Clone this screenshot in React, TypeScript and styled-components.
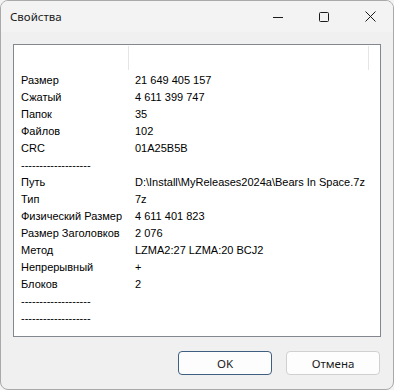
import React from "react";
import styled, { createGlobalStyle } from "styled-components";

const GlobalStyle = createGlobalStyle`
  html, body { margin: 0; padding: 0; background: #f3f3f3; }
  * { box-sizing: border-box; }
`;

const Window = styled.div`
  width: 394px;
  height: 390px;
  border: 1px solid #a9a9a9;
  border-radius: 8px;
  background: #f0f0f0;
  overflow: hidden;
  display: flex;
  flex-direction: column;
  font-family: "Liberation Sans", Arial, sans-serif;
  color: #000;
`;

const TitleBar = styled.div`
  height: 31px;
  display: flex;
  align-items: center;
  background: #f3f3f3;
`;

const Title = styled.div`
  flex: 1;
  padding-left: 9px;
  font-family: "Noto Sans", "Open Sans", sans-serif;
  font-size: 11.5px;
  color: #1a1a1a;
`;

const CaptionButton = styled.div`
  width: 46px;
  height: 31px;
  display: flex;
  align-items: center;
  justify-content: center;
`;

const Content = styled.div`
  padding: 12px 12px 0 12px;
`;

const ListBox = styled.div`
  height: 293px;
  border: 1px solid #828790;
  background: #fff;
  display: flex;
  flex-direction: column;
`;

const Header = styled.div`
  height: 26px;
  display: grid;
  grid-template-columns: 115px 240px 1fr;
  padding-top: 1px;
`;

const HeaderCell = styled.div<{ $line?: boolean }>`
  border-right: ${(p) => (p.$line ? "1px solid #e5e5e5" : "none")};
  height: 24px;
`;

const Row = styled.div`
  height: 17px;
  display: grid;
  grid-template-columns: 115px 1fr;
  align-items: center;
  font-size: 11px;
  white-space: nowrap;
`;

const Label = styled.div`
  padding-left: 7px;
`;

const Value = styled.div`
  padding-left: 6px;
`;

const Footer = styled.div`
  display: flex;
  justify-content: flex-end;
  gap: 14px;
  padding: 14px 13px 0 0;
`;

const Button = styled.button<{ $default?: boolean }>`
  width: 94px;
  height: 24px;
  border-radius: 4px;
  border: 1px solid ${(p) => (p.$default ? "#3e5f80" : "#d0d0d0")};
  background: #fdfdfd;
  font-family: "Noto Sans", "Open Sans", sans-serif;
  font-size: 11.5px;
  color: #1a1a1a;
  padding: 0;
`;

const sep = "-------------------";

const rows: [string, string][] = [
  ["Размер", "21 649 405 157"],
  ["Сжатый", "4 611 399 747"],
  ["Папок", "35"],
  ["Файлов", "102"],
  ["CRC", "01A25B5B"],
  [sep, ""],
  ["Путь", "D:\\Install\\MyReleases2024a\\Bears In Space.7z"],
  ["Тип", "7z"],
  ["Физический Размер", "4 611 401 823"],
  ["Размер Заголовков", "2 076"],
  ["Метод", "LZMA2:27 LZMA:20 BCJ2"],
  ["Непрерывный", "+"],
  ["Блоков", "2"],
  [sep, ""],
  [sep, ""],
];

export default function App() {
  return (
    <>
      <GlobalStyle />
      <Window>
        <TitleBar>
          <Title>Свойства</Title>
          <CaptionButton>
            <svg width="10" height="10" viewBox="0 0 10 10">
              <path d="M0 5.5h10" stroke="#1a1a1a" strokeWidth="1" />
            </svg>
          </CaptionButton>
          <CaptionButton>
            <svg width="10" height="10" viewBox="0 0 10 10">
              <rect x="0.5" y="0.5" width="9" height="9" rx="1" fill="none" stroke="#1a1a1a" strokeWidth="1" />
            </svg>
          </CaptionButton>
          <CaptionButton>
            <svg width="11" height="11" viewBox="0 0 11 11">
              <path d="M0.5 0.5l10 10M10.5 0.5l-10 10" stroke="#1a1a1a" strokeWidth="1" />
            </svg>
          </CaptionButton>
        </TitleBar>
        <Content>
          <ListBox>
            <Header>
              <HeaderCell $line />
              <HeaderCell $line />
              <HeaderCell />
            </Header>
            {rows.map(([l, v], i) => (
              <Row key={i}>
                <Label>{l}</Label>
                <Value>{v}</Value>
              </Row>
            ))}
          </ListBox>
        </Content>
        <Footer>
          <Button $default>OK</Button>
          <Button>Отмена</Button>
        </Footer>
      </Window>
    </>
  );
}
